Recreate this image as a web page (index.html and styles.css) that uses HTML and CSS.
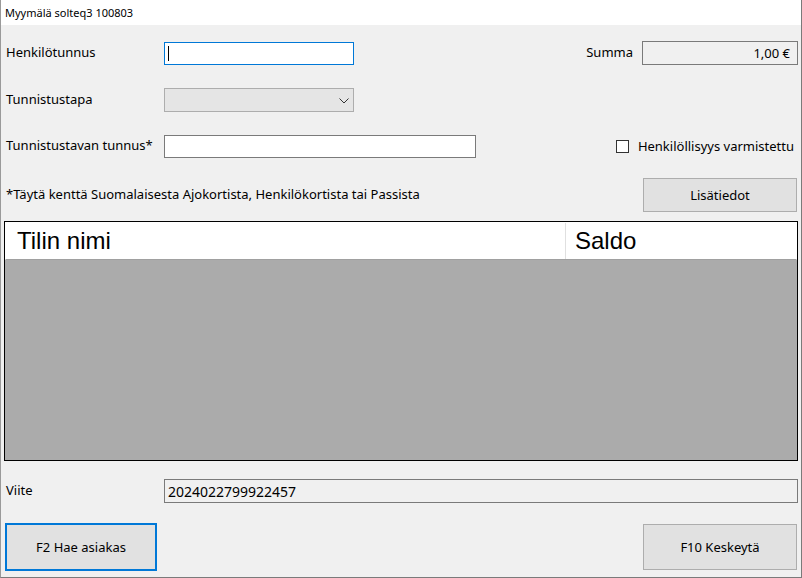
FILE: index.html
```html
<!DOCTYPE html>
<html lang="fi">
<head>
<meta charset="utf-8">
<title>Myymälä solteq3 100803</title>
<link rel="stylesheet" href="styles.css">
</head>
<body>
<div class="window">
  <div class="titlebar">Myymälä solteq3 100803</div>
  <div class="content">
    <div class="row row-1">
      <div class="field">
        <label class="label">Henkilötunnus</label>
        <div class="input input-focus w190"><span class="caret"></span></div>
      </div>
      <div class="field right">
        <label class="label sum-label">Summa</label>
        <div class="input input-readonly sum">1,00 €</div>
      </div>
    </div>
    <div class="row row-2">
      <div class="field">
        <label class="label">Tunnistustapa</label>
        <div class="select w190">
          <svg class="chev" width="10" height="6" viewBox="0 0 10 6"><path d="M0.5 0.5 L5 5 L9.5 0.5" fill="none" stroke="#333" stroke-width="1"/></svg>
        </div>
      </div>
    </div>
    <div class="row row-3">
      <div class="field">
        <label class="label">Tunnistustavan tunnus*</label>
        <div class="input w312"></div>
      </div>
      <div class="check">
        <span class="box"></span>
        <span class="check-label">Henkilöllisyys varmistettu</span>
      </div>
    </div>
    <div class="row row-4">
      <div class="note">*Täytä kenttä Suomalaisesta Ajokortista, Henkilökortista tai Passista</div>
      <button class="btn btn-info">Lisätiedot</button>
    </div>
    <div class="grid">
      <div class="grid-head">
        <div class="col col-name">Tilin nimi</div>
        <div class="col col-saldo">Saldo</div>
      </div>
      <div class="grid-body"></div>
    </div>
    <div class="row row-viite">
      <label class="label">Viite</label>
      <div class="input input-readonly viite">2024022799922457</div>
    </div>
    <div class="row row-buttons">
      <button class="btn btn-f2">F2 Hae asiakas</button>
      <button class="btn btn-f10">F10 Keskeytä</button>
    </div>
  </div>
</div>
</body>
</html>
```
FILE: styles.css
```css
* { box-sizing: border-box; }
html, body { margin: 0; padding: 0; }
body {
  width: 802px;
  height: 578px;
  overflow: hidden;
  font-family: "Noto Sans", "DejaVu Sans", sans-serif;
  font-size: 13px;
  color: #000;
  background: #f0f0f0;
}
.window {
  width: 802px;
  height: 578px;
  background: #f0f0f0;
  border-left: 1px solid #9a9a9a;
  border-right: 1px solid #7a7a7a;
  border-bottom: 1px solid #7a7a7a;
  display: flex;
  flex-direction: column;
}
.titlebar {
  height: 25px;
  background: #fff;
  padding-left: 4px;
  line-height: 25px;
  font-size: 11px;
}
.content {
  flex: 1;
  padding: 0 3px 0 3px;
  display: flex;
  flex-direction: column;
}
.row {
  display: flex;
  align-items: center;
  justify-content: space-between;
}
.field { display: flex; align-items: center; }
.label {
  width: 160px;
  padding-left: 2px;
  padding-bottom: 3px;
}
.row-1 { margin-top: 16px; height: 24px; }
.row-2 { margin-top: 23px; height: 24px; }
.row-3 { margin-top: 23px; height: 23px; }
.row-4 { margin-top: 20px; height: 34px; }
.input {
  height: 23px;
  background: #fff;
  border: 1px solid #7a7a7a;
  display: flex;
  align-items: center;
}
.w190 { width: 190px; }
.w312 { width: 312px; }
.input-focus { border-color: #0078d7; padding-left: 3px; }
.caret { display: block; width: 1px; height: 15px; background: #000; }
.input-readonly { background: #f0f0f0; }
.sum-label { width: auto; margin-right: 9px; }
.sum {
  width: 156px;
  height: 24px;
  justify-content: flex-end;
  padding-right: 7px;
}
.select {
  height: 24px;
  background: #e5e5e5;
  border: 1px solid #adadad;
  position: relative;
}
.chev { position: absolute; right: 4px; top: 9px; }
.check { display: flex; align-items: center; margin-right: 4px; }
.box {
  width: 13px;
  height: 13px;
  background: #fff;
  border: 1px solid #333;
  margin-right: 9px;
}
.check-label { padding-bottom: 2px; }
.note { padding-left: 2px; padding-bottom: 3px; }
.btn {
  font-family: inherit;
  font-size: 13px;
  color: #000;
  background: #e1e1e1;
  border: 1px solid #adadad;
  padding: 0;
  margin: 0;
}
.btn-info { width: 154px; height: 34px; margin-right: 1px; }
.grid {
  margin-top: 9px;
  height: 240px;
  border: 1px solid #000;
  display: flex;
  flex-direction: column;
}
.grid-head {
  height: 38px;
  background: #fff;
  display: flex;
  border: 1px solid #fff;
  border-bottom: 1px solid #a0a0a0;
  font-family: "Liberation Sans", Arial, sans-serif;
  font-size: 24px;
}
.col { display: flex; align-items: center; }
.col-name { width: 560px; padding-left: 11px; border-right: 1px solid #e0e0e0; }
.col-saldo { flex: 1; padding-left: 9px; }
.grid-body { flex: 1; background: #ababab; }
.row-viite { margin-top: 18px; height: 24px; justify-content: flex-start; }
.viite {
  flex: 1;
  height: 24px;
  padding-left: 3px;
  font-size: 14px;
}
.row-buttons { margin-top: 20px; align-items: flex-start; }
.btn-f2 {
  width: 152px;
  height: 48px;
  border: 2px solid #0078d7;
  margin-left: 1px;
}
.btn-f10 { width: 154px; height: 46px; margin-top: 1px; margin-right: 1px; }
```
